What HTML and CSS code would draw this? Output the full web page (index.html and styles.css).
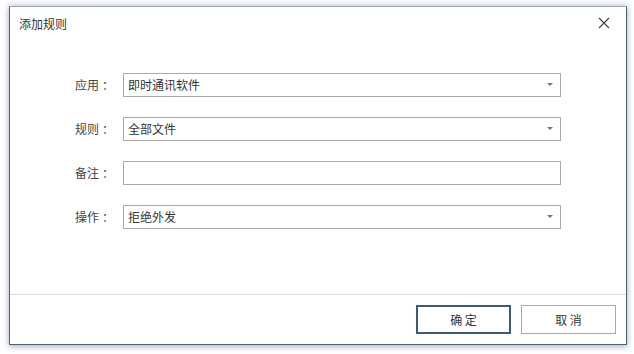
FILE: index.html
```html
<!DOCTYPE html>
<html lang="zh">
<head>
<meta charset="utf-8">
<link rel="stylesheet" href="styles.css">
</head>
<body>
<div class="dialog">
  <div class="header">
    <span class="title">添加规则</span>
    <span class="close"><svg width="12" height="12" viewBox="0 0 12 12"><path d="M1 1L11 11M11 1L1 11" stroke="#444" stroke-width="1.2" fill="none"/></svg></span>
  </div>
  <div class="form">
    <div class="row">
      <label class="label">应用<span class="colon">：</span></label>
      <div class="field select"><span>即时通讯软件</span><i class="arrow"></i></div>
    </div>
    <div class="row">
      <label class="label">规则<span class="colon">：</span></label>
      <div class="field select"><span>全部文件</span><i class="arrow"></i></div>
    </div>
    <div class="row">
      <label class="label">备注<span class="colon">：</span></label>
      <div class="field"></div>
    </div>
    <div class="row">
      <label class="label">操作<span class="colon">：</span></label>
      <div class="field select"><span>拒绝外发</span><i class="arrow"></i></div>
    </div>
  </div>
  <div class="footer">
    <button class="btn primary">确 定</button>
    <button class="btn">取 消</button>
  </div>
</div>
</body>
</html>
```
FILE: styles.css
```css
html, body {
  margin: 0;
  padding: 0;
  background: #fff;
  width: 634px;
  height: 354px;
  overflow: hidden;
  font-family: "Microsoft YaHei", "Noto Sans CJK SC", sans-serif;
  font-size: 12px;
  color: #333;
}
.dialog {
  box-sizing: border-box;
  margin: 6px 0 0 9px;
  width: 618px;
  height: 339px;
  border: 1px solid #4e6672;
  border-top-color: #9aa8b4;
  background: #fff;
  display: flex;
  flex-direction: column;
  box-shadow: 0 2px 6px rgba(60, 70, 110, 0.35), 0 -2px 6px rgba(150, 165, 190, 0.35);
}
.header {
  height: 32px;
  display: flex;
  align-items: center;
  justify-content: space-between;
  padding: 0 16px 0 9px;
}
.title {
  font-size: 12px;
  color: #333;
}
.close {
  display: flex;
  align-items: center;
}
.form {
  flex: 1;
  padding-top: 34px;
  display: flex;
  flex-direction: column;
  gap: 20px;
}
.row {
  display: flex;
  align-items: center;
  height: 24px;
}
.label {
  width: 104px;
  text-align: right;
  padding-right: 9px;
  color: #444;
  line-height: 22px;
}
.colon {
  margin-left: 3px;
}
.field {
  box-sizing: border-box;
  width: 438px;
  height: 24px;
  border: 1px solid #a9a9a9;
  display: flex;
  align-items: center;
  justify-content: space-between;
  padding: 0 7px 1px 4px;
  color: #333;
}
.arrow {
  width: 0;
  height: 0;
  border-left: 3px solid transparent;
  border-right: 3px solid transparent;
  border-top: 3px solid #777;
}
.footer {
  border-top: 1px solid #dcdcdc;
  padding: 10px 10px 10px 0;
  display: flex;
  justify-content: flex-end;
  gap: 10px;
}
.btn {
  box-sizing: border-box;
  width: 95px;
  height: 29px;
  border: 1px solid #a9a9a9;
  background: #fff;
  font-family: "Microsoft YaHei", "Noto Sans CJK SC", sans-serif;
  font-size: 12px;
  color: #333;
  padding: 0;
}
.btn.primary {
  border: 2px solid #3c5b6d;
}
```
